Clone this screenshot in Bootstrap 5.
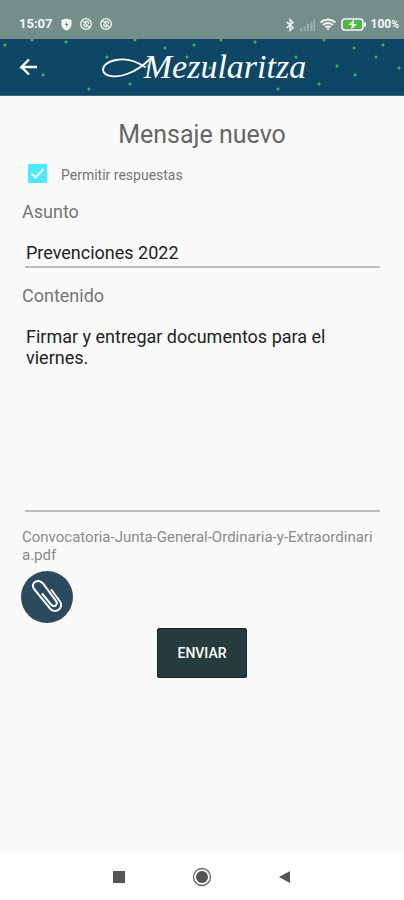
<!DOCTYPE html>
<html lang="es">
<head>
<meta charset="utf-8">
<meta name="viewport" content="width=device-width, initial-scale=1">
<title>Mezularitza</title>
<link rel="stylesheet" href="https://cdn.jsdelivr.net/npm/bootstrap@5.3.0/dist/css/bootstrap.min.css">
<style>
  body { font-family: Roboto, "Liberation Sans", sans-serif; background: #fafafa; color: #757575; }
  .status-strip { height: 39px; background: #748f89; color: #f4f8f7; padding: 12px 5px 0 19px; font-size: 13px; line-height: 16px; }
  .status-strip svg { display: block; }
  .signal-icons { font-size: 12px; }
  .brand-bar {
    height: 57px; padding: 0 19px; color: #fff; background-color: #0d4765; border-bottom: 1px solid #3f6579;
    --dot: #3fae4c 0, #3fae4c 1px, transparent 2px;
    background-image:
      radial-gradient(circle at 5px 6px, var(--dot)), radial-gradient(circle at 32px 1px, var(--dot)),
      radial-gradient(circle at 66px 3px, var(--dot)), radial-gradient(circle at 107px 18px, var(--dot)),
      radial-gradient(circle at 135px 1px, var(--dot)), radial-gradient(circle at 148px 27px, var(--dot)),
      radial-gradient(circle at 165px 9px, var(--dot)), radial-gradient(circle at 187px 18px, var(--dot)),
      radial-gradient(circle at 21px 29px, var(--dot)), radial-gradient(circle at 43px 36px, var(--dot)),
      radial-gradient(circle at 166px 36px, var(--dot)), radial-gradient(circle at 130px 45px, var(--dot)),
      radial-gradient(circle at 89px 50px, var(--dot));
    background-size: 189px 57px;
  }
  .brand-bar .back { width: 20px; }
  .wordmark { font: italic 34px/40px "Liberation Serif", serif; padding-right: 16px; }
  .wordmark svg { margin-right: -12px; }
  .compose { padding: 22px 22px 0; }
  .compose h1 { font-size: 25px; line-height: 34px; color: #666; }
  .allow { height: 40px; padding-top: 8px; gap: 14px; margin-left: 6px; font-size: 14px; line-height: 22px; }
  .allow .form-check-input { width: 19px; height: 19px; border-radius: 1px; border-color: #4deaff; }
  .allow .form-check-input:checked {
    background-color: #4deaff; border-color: #4deaff; background-size: 19px 19px;
    background-image: url("data:image/svg+xml,%3csvg xmlns='http://www.w3.org/2000/svg' viewBox='0 0 19 19'%3e%3cpath d='M3.500 9.500l4 4 8-8.500' fill='none' stroke='white' stroke-width='2'/%3e%3c/svg%3e");
  }
  .field-label { font-size: 18px; line-height: 24px; }
  .line-field { margin: 0 2px 0 3px; }
  .line-field .form-control { border: 0; border-bottom: 2px solid #bcbcbc; border-radius: 0; background: transparent; color: #222; font-size: 18px; line-height: 21px; padding: 18px 0 3px 1px; resize: none; overflow: hidden; }
  .line-field textarea.form-control { height: 204px; }
  .file-name { font-size: 15px; line-height: 18px; color: #8a8a8a; word-break: break-all; margin-top: 16px; }
  .attach { width: 52px; height: 52px; background: #2b4a5e; margin: 7px 0 0 -1px; }
  .send { width: 90px; height: 50px; margin-top: 5px; border-radius: 2px; background: #263c3c; border: 1px solid #142828; color: #fff; font-size: 14px; font-weight: 500; }
  .send:hover { background: #1d3030; color: #fff; }
  .system-nav { height: 46px; background: #fff; padding: 0 110px; }
</style>
</head>
<body class="d-flex flex-column min-vh-100">
<div class="status-strip d-flex align-items-start justify-content-between">
  <div class="d-flex align-items-center gap-2 pt-1">
    <span class="fw-bold">15:07</span>
    <svg width="11" height="13" viewBox="0 0 11 13"><path d="M5.500.5 10.500 2v4.500q0 4-5 6-5-2-5-6V2z" fill="currentColor"/><path d="M6 3.500 3.500 7h1.700L5 9.500 7.500 6H5.800z" fill="#748f89"/></svg>
    <svg width="12" height="12" viewBox="0 0 12 12" fill="none" stroke="currentColor" stroke-width="1.300"><circle cx="6" cy="6" r="5.300"/><path d="M3 3l6.500 6.500M4 8.500V6M5 3.500h2.500l1 1V6M4.500 8.500H7"/></svg>
    <svg width="12" height="12" viewBox="0 0 12 12" fill="none" stroke="currentColor" stroke-width="1.300"><circle cx="6" cy="6" r="5.300"/><path d="M3 3l6.500 6.500M4 8.500V6M5 3.500h2.500l1 1V6M4.500 8.500H7"/></svg>
  </div>
  <div class="signal-icons d-flex align-items-center gap-1 pt-1">
    <svg width="10" height="14" viewBox="0 0 10 14" fill="none" stroke="currentColor" stroke-width="1.400"><path d="M1.500 4 8 9.500 5 12.500v-11L8 4.500 1.500 10"/></svg>
    <svg width="16" height="12" viewBox="0 0 16 12" stroke="#9db0ac" stroke-width="2"><path d="M2 12V9.500M5.500 12V7.500M9 12V5M12.500 12V3M15.500 12V0"/></svg>
    <svg width="18" height="13" viewBox="0 0 18 13" fill="none" stroke="currentColor" stroke-width="1.800"><path d="M1.500 4.500q7.500-6 15 0M4 7q5-4 10 0M6.500 9.500q2.500-2 5 0"/><path d="M7.500 10.500h3L9 12.500z" fill="currentColor" stroke="none"/></svg>
    <svg width="26" height="13" viewBox="0 0 26 13"><rect x="1" y="1" width="21" height="11" rx="3" fill="none" stroke="currentColor" stroke-width="1.600"/><path d="M24 4.500v4" stroke="currentColor" stroke-width="2"/><rect x="3" y="3" width="17" height="7" rx="1" fill="#43c32f"/><path d="M13 1.500 7.500 7H11l-1 4.500L16 6h-3.500z" fill="#fff"/></svg>
    <span class="fw-bold">100<small>%</small></span>
  </div>
</div>
<header class="brand-bar d-flex align-items-center">
  <button type="button" class="back btn p-0 border-0 text-white d-flex" aria-label="Volver">
    <svg width="18" height="18" viewBox="0 0 18 18" fill="none" stroke="currentColor" stroke-width="2.400"><path d="M18 9H3M10 1.500 2.500 9l7.500 7.500"/></svg>
  </button>
  <div class="wordmark flex-grow-1 d-flex align-items-center justify-content-center">
    <svg width="54" height="24" viewBox="0 0 54 24" fill="none" stroke="currentColor" stroke-linecap="round"><path d="M43 12C34 6 24 3 14 5 5 7 1 11 1 15c1 7 14 8 24 4 9-3 17-9 24-16" stroke-width="1.800"/></svg>
    <span>Mezularitza</span>
  </div>
</header>
<main class="compose flex-grow-1">
  <form>
    <h1 class="text-center fw-normal mb-0">Mensaje nuevo</h1>
    <div class="allow d-flex align-items-start">
      <input class="form-check-input m-0 mt-1 flex-shrink-0" type="checkbox" id="allow" checked>
      <label for="allow" class="pt-1">Permitir respuestas</label>
    </div>
    <label class="field-label d-block pt-2" for="subject">Asunto</label>
    <div class="line-field"><input class="form-control shadow-none" type="text" id="subject" value="Prevenciones 2022"></div>
    <label class="field-label d-block mt-3" for="content">Contenido</label>
    <div class="line-field"><textarea class="form-control shadow-none" id="content">Firmar y entregar documentos para el viernes.</textarea></div>
    <p class="file-name mb-0">Convocatoria-Junta-General-Ordinaria-y-Extraordinaria.pdf</p>
    <button type="button" class="attach btn rounded-circle border-0 p-0 d-flex align-items-center justify-content-center" aria-label="Adjuntar archivo">
      <svg width="34" height="34" viewBox="0 0 34 34" fill="none" stroke="#fff" stroke-width="2" stroke-linecap="round"><path d="M21.500 10 30 21.500C34 28 25.500 34.500 20 28.500L4 9C0 3 8-2 13 3.500L26 21c2.500 4-2 7-5 3.500L12.500 14"/></svg>
    </button>
    <button type="submit" class="send btn d-block mx-auto p-0">ENVIAR</button>
  </form>
</main>
<nav class="system-nav d-flex align-items-center justify-content-between" aria-label="Sistema">
  <button type="button" class="btn p-0 border-0 d-flex" aria-label="Recientes"><svg width="18" height="18" viewBox="0 0 18 18"><path d="M3 3h12v12H3z" fill="#555"/></svg></button>
  <button type="button" class="btn p-0 border-0 d-flex" aria-label="Inicio"><svg width="20" height="20" viewBox="0 0 20 20"><circle cx="10" cy="10" r="8.500" fill="none" stroke="#666" stroke-width="1.300"/><circle cx="10" cy="10" r="6" fill="#555"/></svg></button>
  <button type="button" class="btn p-0 border-0 d-flex" aria-label="Atrás"><svg width="18" height="18" viewBox="0 0 18 18"><path d="M14 3v12L3 9z" fill="#555"/></svg></button>
</nav>
<script src="https://cdn.jsdelivr.net/npm/bootstrap@5.3.0/dist/js/bootstrap.bundle.min.js"></script>
</body>
</html>
